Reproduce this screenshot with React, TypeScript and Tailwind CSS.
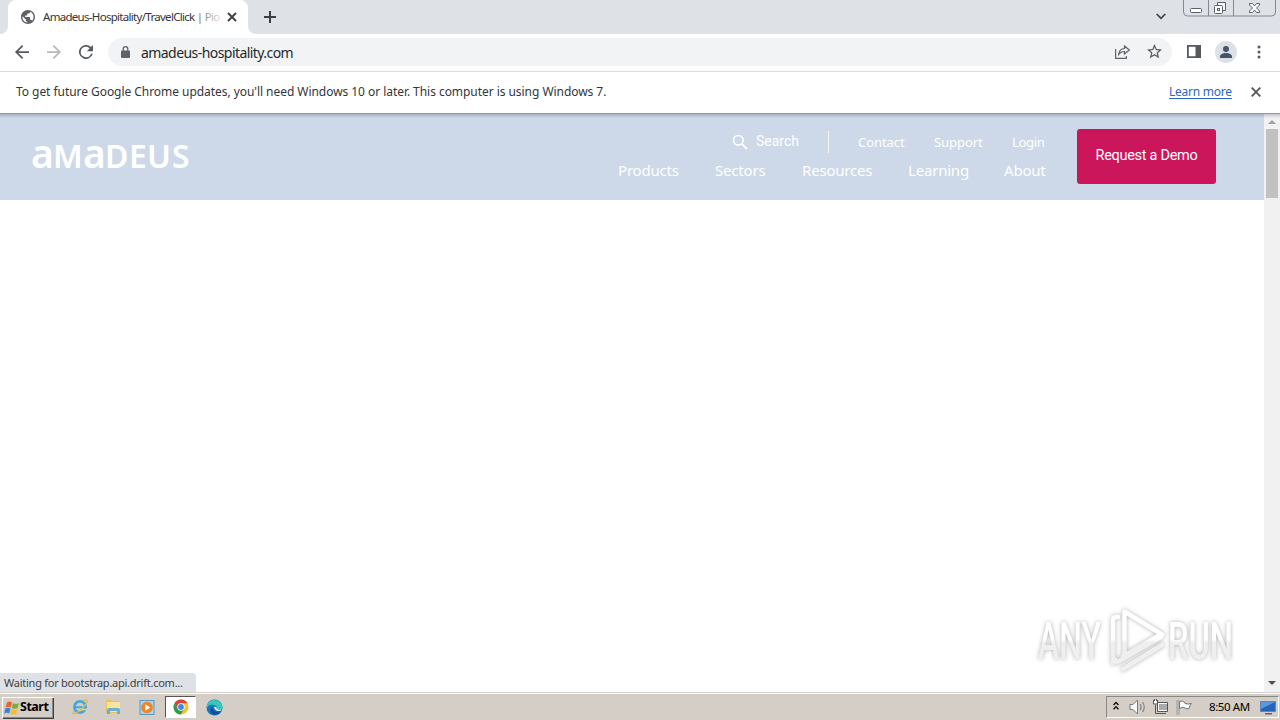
import type { ReactNode } from "react";

const UI = "font-['Noto_Sans',sans-serif]";

const NAV = [
  { label: "Products", cls: "w-[62px] mr-[35px]" },
  { label: "Sectors", cls: "w-[51px] mr-[36px]" },
  { label: "Resources", cls: "w-[70px] mr-[36px]" },
  { label: "Learning", cls: "w-[60px] mr-[36px]" },
  { label: "About", cls: "w-[42px]" },
];

function Svg({ w, h = w, box, className = "", children }: { w: number; h?: number; box?: string; className?: string; children: ReactNode }) {
  return (
    <svg width={w} height={h} viewBox={box ?? `0 0 ${w} ${h}`} className={`block shrink-0 ${className}`} fill="none">
      {children}
    </svg>
  );
}

function TabStrip() {
  return (
    <div className="relative flex h-[34px] bg-[#dee1e6]">
      <Svg w={8} h={34}><path d="M8 26v8H0a8 8 0 0 0 8-8" fill="#fff" /></Svg>
      <div className="flex h-[34px] w-[240px] items-center rounded-t-[8px] bg-white pl-[13px]">
        <Svg w={14} box="2 2 20 20">
          <path fill="#5f6368" d="M12 2C6.48 2 2 6.48 2 12s4.48 10 10 10 10-4.480 10-10S17.520 2 12 2M4 12q0-.6.1-1.200L8.900 15.600v1c0 1.100.9 2 2 2v1.300C7 19.500 4 16 4 12m13.900 5.400c-.3-.8-1-1.400-1.900-1.400h-1v-3c0-.6-.4-1-1-1H8v-2h2c.6 0 1-.4 1-1V7h2c1.100 0 2-.9 2-2v-.4c2.900 1.200 5 4.100 5 7.400 0 2.100-.8 4-2.100 5.400" />
        </Svg>
        <div className="relative ml-[8px] w-[176px] text-[11.500px] leading-[18px] tracking-[-0.7px] whitespace-nowrap text-[#333639]">
          Amadeus-Hospitality/TravelClick | Pio
          <div className="absolute inset-y-0 -right-1 w-6 bg-linear-to-r from-white/30 to-white/90" />
        </div>
        <Svg w={10} className="ml-[8px]"><path d="m1 1 8 8M9 1 1 9" stroke="#3c4043" strokeWidth="1.900" /></Svg>
      </div>
      <Svg w={8} h={34}><path d="M0 26v8h8a8 8 0 0 1-8-8" fill="#fff" /></Svg>
      <Svg w={12} className="mt-[11px] ml-[8px]"><path d="M6 0v12M0 6h12" stroke="#3c4043" strokeWidth="2" /></Svg>
      <Svg w={10} h={7} className="mt-[13px] ml-auto"><path d="m.7 1 4.300 4.300L9.300 1" stroke="#3c4043" strokeWidth="1.700" /></Svg>
      <Svg w={93} h={17} className="mr-[4px] ml-[17px]">
        <path d="M.5 0v12q0 4 4 4h84q4 0 4-4V0M25.500 0v16M50.500 0v16" stroke="#85888f" />
        <rect x="7.500" y="8.500" width="11" height="4" rx="1" fill="#fff" stroke="#5c6068" />
        <path d="M34.500 5.500v-3h8v8h-3" stroke="#5c6068" fill="#f8f8f8" />
        <rect x="31.500" y="5.500" width="8" height="8" rx="1" fill="#fff" stroke="#5c6068" />
        <rect x="34.500" y="8.500" width="2" height="2" stroke="#5c6068" />
        <path d="M66.500 3.500h3l2 2.500 2-2.500h3v1.500L73.500 8l3 3v1.500h-3l-2-2.500-2 2.500h-3V11l3-3-3-3z" fill="#fff" stroke="#5c6068" />
      </Svg>
    </div>
  );
}

function Toolbar() {
  return (
    <div className="flex h-[38px] items-center border-b border-[#dadce0] bg-white pr-[19px] pb-[2px] pl-[15px]">
      <Svg w={14} box="4 4 16 16"><path fill="#55585d" d="M20 11H7.800l5.600-5.600L12 4l-8 8 8 8 1.400-1.400L7.800 13H20z" /></Svg>
      <Svg w={14} box="4 4 16 16" className="ml-[18px]"><path fill="#b6b8bb" d="m12 4-1.400 1.400 5.600 5.600H4v2h12.200l-5.600 5.600L12 20l8-8z" /></Svg>
      <Svg w={14} box="4 4 16 16" className="ml-[18px]"><path fill="#55585d" d="M17.650 6.350A8 8 0 1 0 19.730 14h-2.080A6 6 0 1 1 12 6c1.660 0 3.140.69 4.220 1.780L13 11h7V4z" /></Svg>
      <div className="ml-[15px] flex h-[28px] w-[1064px] items-center rounded-full bg-[#f1f3f4] pr-[10px] pl-[13px]">
        <Svg w={9} h={12}>
          <path fill="#5f6368" d="M1 4.500h7q1 0 1 1V11q0 1-1 1H1q-1 0-1-1V5.500q0-1 1-1" />
          <path d="M2.200 5V3a2.300 2.300 0 0 1 4.600 0v2" stroke="#5f6368" strokeWidth="1.300" />
        </Svg>
        <span className="mt-[2px] ml-[11px] text-[14px] leading-[20px] tracking-[-0.56px] text-[#26292c]">amadeus-hospitality.com</span>
        <Svg w={15} h={14} className="ml-auto">
          <path d="M.6 4v9.400h10.800V11M9.500 1l4.800 4-4.800 4V6.500Q6 6.300 3.700 9.300 4.300 4 9.500 3.500z" stroke="#5f6368" strokeWidth="1.200" />
        </Svg>
        <Svg w={15} box="2 2 20 20" className="ml-[17px]">
          <path fill="#55585d" d="m22 9.240-7.190-.62L12 2 9.190 8.630 2 9.240l5.460 4.730L5.820 21 12 17.270 18.180 21l-1.630-7.030zM12 15.400l-3.760 2.270 1-4.280-3.320-2.880 4.380-.38L12 6.100l1.710 4.040 4.380.38-3.320 2.880 1 4.280z" />
        </Svg>
      </div>
      <Svg w={14} h={13} className="ml-[15px]"><path fillRule="evenodd" d="M0 0h14v13H0zM1.800 1.800v9.400h6.700V1.800z" fill="#55585d" /></Svg>
      <div className="ml-[14px] flex h-[22px] w-[22px] items-center justify-center rounded-full bg-[#dde0e5]">
        <Svg w={12}><path fill="#49536e" d="M6 0a3 3 0 1 1 0 6 3 3 0 0 1 0-6m0 7c3 0 6 1.200 6 3.500V12H0v-1.500C0 8.200 3 7 6 7" /></Svg>
      </div>
      <Svg w={4} h={14} className="ml-auto"><g fill="#55585d"><circle cx="2" cy="2" r="1.500" /><circle cx="2" cy="7" r="1.500" /><circle cx="2" cy="12" r="1.500" /></g></Svg>
    </div>
  );
}

function InfoBar() {
  return (
    <div className="flex h-[42px] items-center border-b border-[#8d9ba8] bg-white pr-[19px] pb-[1px] pl-[16px] text-[12px] text-[#333639]">
      <span className="tracking-[-0.05px] whitespace-nowrap">To get future Google Chrome updates, you'll need Windows 10 or later. This computer is using Windows 7.</span>
      <span className="ml-auto w-[63px] tracking-[-0.25px] whitespace-nowrap text-[#2a68c4] underline underline-offset-2">Learn more</span>
      <Svg w={10} className="ml-[19px]"><path d="m.7.7 8.600 8.600M9.300.7.700 9.300" stroke="#55585d" strokeWidth="1.900" /></Svg>
    </div>
  );
}

function SiteHeader() {
  return (
    <header className="flex h-[86px] bg-[#cdd9e8] pl-[31px] text-white">
      <div aria-label="amadeus" className="mt-[23px] flex h-[36px] w-[160px] items-baseline font-['Noto_Sans',sans-serif] text-[32px] leading-[32px] font-semibold whitespace-nowrap">
        <span className="w-[22px] text-[39px]">a</span>
        <span className="w-[30px]">M</span>
        <span className="w-[22px] text-[39px]">a</span>
        <span className="w-[24px]">D</span>
        <span className="w-[18px]">E</span>
        <span className="w-[25px]">U</span>
        <span>S</span>
      </div>
      <div className="ml-auto flex w-[428px] flex-col pt-[17px]">
        <div className="flex h-[22px] items-center justify-end pr-[1px] text-[13px]">
          <Svg w={16}><circle cx="6.300" cy="6.300" r="4.800" stroke="#fff" strokeWidth="1.600" /><path d="m10 10 5 5" stroke="#fff" strokeWidth="1.900" /></Svg>
          <span className="ml-[8px] w-[44px] pb-[2px] font-['Roboto',sans-serif] text-[14px]">Search</span>
          <div className="ml-[28px] h-[22px] w-px bg-white/80" />
          <span className="mt-[2px] ml-[29px] w-[47px] tracking-[-0.05px]">Contact</span>
          <span className="mt-[2px] ml-[29px] w-[49px] tracking-[-0.05px]">Support</span>
          <span className="mt-[2px] ml-[29px] w-[33px] tracking-[-0.3px]">Login</span>
        </div>
        <nav className="mt-[6px] flex text-[15px] leading-[22px] tracking-[-0.2px]">
          {NAV.map((n) => <a key={n.label} className={`${n.cls} whitespace-nowrap`}>{n.label}</a>)}
        </nav>
      </div>
      <button className="mt-[15px] mr-[48px] ml-[31px] h-[55px] w-[139px] rounded-[3px] bg-[#cc165b] pb-[2px] font-['Roboto',sans-serif] text-[14.500px] tracking-[-0.3px] whitespace-nowrap">Request a Demo</button>
    </header>
  );
}

function Watermark() {
  return (
    <Svg w={212} h={76} className="absolute top-[491px] left-[1032px] overflow-visible drop-shadow-[0_0_2px_#b0b0b0]">
      <defs>
        <linearGradient id="face" gradientUnits="userSpaceOnUse" x1="0" y1="34" x2="0" y2="38">
          <stop stopColor="#fff" /><stop offset="1" stopColor="#efefef" />
        </linearGradient>
      </defs>
      <g fontFamily="Roboto, sans-serif" fontWeight="500" fontSize="51" fill="url(#face)">
        <text x="6" y="54" textLength="63" lengthAdjust="spacingAndGlyphs">ANY</text>
        <text x="136" y="54" textLength="65" lengthAdjust="spacingAndGlyphs">RUN</text>
      </g>
      <path d="M86 12h-2q-3 0-3 4v42M92.500 50V6.500L130 29.500M91 51.500 126 31M83 54q0 4 4 2l42-24M91 64l39-24" stroke="url(#face)" strokeWidth="4.500" strokeLinejoin="round" strokeLinecap="round" />
    </Svg>
  );
}

function Scrollbar() {
  return (
    <div className="flex w-[16px] shrink-0 flex-col items-center bg-[#f1f1f1] pt-[6px] pb-[7px]">
      <Svg w={8} h={4}><path d="M0 4h8L4 0z" fill="#a0a0a0" /></Svg>
      <div className="mt-[5px] h-[69px] w-[12px] bg-[#c1c1c1]" />
      <Svg w={8} h={4} className="mt-auto"><path d="M0 0h8L4 4z" fill="#505050" /></Svg>
    </div>
  );
}

function Taskbar() {
  return (
    <div className="flex h-[28px] items-center border-t border-[#d4d0c8] bg-[#d5cec6] shadow-[inset_0_1px_0_#fff]">
      <div className="mt-[1px] ml-[2px] flex h-[21px] w-[51px] items-center border-t border-l border-white pl-[1px] shadow-[1px_1px_0_#404040,inset_-1px_-1px_0_#888]">
        <Svg w={16} h={16}>
          <path d="M3 2.500Q6 .5 8 2.500L6.800 7.500Q4.500 6 1.500 7.500z" fill="#ee6030" />
          <path d="M9 3q3 1.800 6 0l-1.300 5q-3 1.500-6 0z" fill="#78ae3b" />
          <path d="M1.200 8.600q3-1.500 5.300 0l-1.200 5Q3 12 .2 13.500z" fill="#4381cb" />
          <path d="M7.500 9q3 1.500 6 0l-1.300 5q-3 1.500-6 0z" fill="#f5bd35" />
        </Svg>
        <span className="text-[12.500px] font-bold tracking-[-0.5px] text-black">Start</span>
      </div>
      {/* Internet Explorer */}
      <Svg w={18} className="mt-[1px] ml-[18px]">
        <circle cx="9" cy="9" r="5.600" stroke="#42a8df" strokeWidth="2.700" />
        <path d="M4 9.200h11" stroke="#42a8df" strokeWidth="2" />
        <path d="M11 10.700h6v1.600h-6z" fill="#d5cec6" />
        <path d="M2.500 13C-.5 19 8 14.500 13 8.500s3.500-8-1-5.500" stroke="#e7b83c" strokeWidth="1.300" />
      </Svg>
      {/* Explorer */}
      <Svg w={18} className="mt-[1px] ml-[15px]">
        <path d="M2 2h5l1 1h7v12H2z" fill="#e7c15c" />
        <path d="M3 4h13v10H3z" fill="#f8e49b" />
        <path d="M3 16v-4q0-2 2-2h9q2 0 2 2v4h-3v-3H6v3z" fill="#6caed5" />
      </Svg>
      {/* Media Player */}
      <Svg w={17} className="mt-[1px] ml-[17px]">
        <rect x="1" y="1.500" width="14" height="14" fill="#a9d4ed" stroke="#5a99c3" />
        <circle cx="8" cy="8.500" r="5.800" fill="#ee8522" />
        <path d="m6.300 5.200 5 3.300-5 3.300z" fill="#fff" />
      </Svg>
      <div className="mt-[1px] ml-[9px] flex h-[22px] w-[31px] items-center justify-center border border-[#555] border-r-white border-b-white bg-white">
        <Svg w={16}>
          <circle cx="8" cy="8" r="7.500" fill="#f6c52b" />
          <path d="M1.500 4.250A7.500 7.500 0 0 1 14.500 4.250H8L4.800 9.900z" fill="#dd4437" />
          <path d="M1.500 4.250 4.800 9.900 8 11.700l3.200-1.800L7.700 15.500A7.500 7.500 0 0 1 1.500 4.250" fill="#32984d" />
          <circle cx="8" cy="8" r="3.700" fill="#fff" /><circle cx="8" cy="8" r="2.900" fill="#4285e8" />
        </Svg>
      </div>
      {/* Edge */}
      <Svg w={17} className="mt-[1px] ml-[10px]">
        <circle cx="8.500" cy="8.500" r="8" fill="#1976bd" />
        <path d="M.8 7C2 1.500 8 0 12 1.500s5.500 6 4 8.500-6 1.500-5.500 0 1-3-2.500-4-6 0-7.200 3" fill="#38c6ba" />
        <path d="M7 8c-1 4 3 6 7.500 4-2 5-9 5-10 0Q4 9 7 8" fill="#124d94" />
        <path d="M8 8q3-1 2.600 1.700Q11 11 16 11q-6 3-8-3" fill="#f2fafa" />
      </Svg>
      <div className="mt-[1px] mr-[1px] ml-auto flex h-[22px] w-[173px] items-center border border-[#888] border-r-white border-b-white">
        <Svg w={6} h={9} className="mb-[3px] ml-[6px]"><path d="m.5 4 2.500-2.500L5.500 4M.5 8.300 3 5.800l2.500 2.500" stroke="#111" strokeWidth="1.400" /></Svg>
        <Svg w={17} h={16} className="ml-[10px]">
          <path d="M1 5.500h3L8.500 1v14L4 10.500H1z" fill="#fafafa" stroke="#777" />
          <path d="M11 5q2 3 0 6M13.500 3q3.500 5 0 10" stroke="#828282" strokeWidth="1.200" />
        </Svg>
        <Svg w={17} h={16} className="ml-[6px]">
          <path d="M6.500 4.500h9v7h-9z" fill="#aaa" stroke="#fff" /><path d="M5.500 3.500h10v9h-10zM8 14.500h6M3.500 6v8.500H8" stroke="#555" />
          <path d="M1.500 1v4h4V1M2.500 0v2M4.500 0v2" fill="#fff" stroke="#555" />
        </Svg>
        <Svg w={17} h={17} className="ml-[7px]">
          <path d="M2 1v15" stroke="#666" strokeWidth="2.500" /><path d="M2 1v15" stroke="#fff" />
          <path d="M3.500 2.500q3-1.500 5.500 1v1q3 1 6.500 0-2 2-2.500 5-2 1-4-.5-3-1.500-5.500.5z" fill="#fafafa" stroke="#777" />
        </Svg>
        <span className="ml-[16px] w-[42px] text-[11.500px] tracking-[-0.4px] whitespace-nowrap text-black">8:50 AM</span>
        <Svg w={16} h={15} className="ml-[9px]">
          <path d="M.5 1.500h15v10H.5z" fill="#2464bb" stroke="#5d87ba" /><path d="M1 2h14L1 9z" fill="#5b98dc" />
          <path d="M5 13h7v1.500H5z" fill="#456993" />
        </Svg>
      </div>
    </div>
  );
}

export default function App() {
  return (
    <div className={`flex h-[720px] w-[1280px] flex-col overflow-hidden bg-white ${UI}`}>
      <TabStrip />
      <Toolbar />
      <InfoBar />
      <div className="relative flex min-h-0 flex-1">
        <main className="flex-1 bg-white"><SiteHeader /></main>
        <Scrollbar />
        <div className="absolute inset-x-0 top-0 h-[4px] bg-linear-to-b from-slate-700/25 to-transparent" />
        <Watermark />
        <div className="absolute bottom-0 left-0 h-[19px] w-[196px] rounded-tr-[4px] bg-[#dee1e6] pl-[4px] text-[11px] leading-[20px] tracking-[-0.25px] whitespace-nowrap text-[#3c4043]">Waiting for bootstrap.api.drift.com...</div>
      </div>
      <Taskbar />
    </div>
  );
}
